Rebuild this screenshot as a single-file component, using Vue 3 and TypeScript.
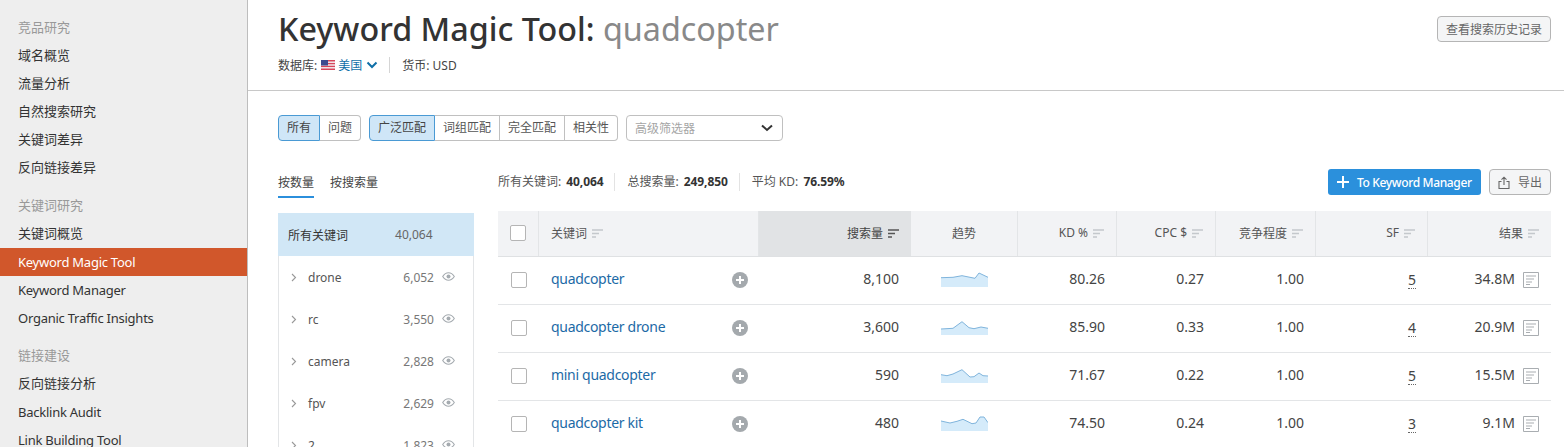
<script setup lang="ts">
interface Row { kw: string; vol: string; spark: string; kd: string; cpc: string; sf: string; res: string }
const nav = [
  { label: '竞品研究', items: ['域名概览', '流量分析', '自然搜索研究', '关键词差异', '反向链接差异'] },
  { label: '关键词研究', items: ['关键词概览', 'Keyword Magic Tool', 'Keyword Manager', 'Organic Traffic Insights'] },
  { label: '链接建设', items: ['反向链接分析', 'Backlink Audit', 'Link Building Tool'] },
]
const isLatin = (s: string) => /^[\x00-\x7f]+$/.test(s)
const groups = [
  { name: 'drone', n: '6,052' }, { name: 'rc', n: '3,550' }, { name: 'camera', n: '2,828' },
  { name: 'fpv', n: '2,629' }, { name: '2', n: '1,823' },
]
const heads = ['KD %', 'CPC $', '竞争程度', 'SF', '结果']
const rows: Row[] = [
  { kw: 'quadcopter', vol: '8,100', spark: '0,5.7 12,5.3 21,3.7 34,6.3 38,1 47,5.3', kd: '80.26', cpc: '0.27', sf: '5', res: '34.8M' },
  { kw: 'quadcopter drone', vol: '3,600', spark: '0,9 12,8.3 21,1.7 28,7.7 33,8.7 40,7 47,8.3', kd: '85.90', cpc: '0.33', sf: '4', res: '20.9M' },
  { kw: 'mini quadcopter', vol: '590', spark: '0,6.7 6,7.7 12,6 21,1.7 29,9 33,8.7 38,5 42,7.7 47,8', kd: '71.67', cpc: '0.22', sf: '5', res: '15.5M' },
  { kw: 'quadcopter kit', vol: '480', spark: '0,5 9,7 16,5.3 22,3.3 31,7.7 35,7 39,1 43,1 47,6.7', kd: '74.50', cpc: '0.24', sf: '3', res: '9.1M' },
]
</script>

<template>
  <div class="page">
    <aside class="side">
      <section v-for="g in nav" :key="g.label" class="side-group">
        <div class="side-label cjk">{{ g.label }}</div>
        <div
          v-for="i in g.items"
          :key="i"
          class="side-item"
          :class="{ active: i === 'Keyword Magic Tool', cjk: !isLatin(i), latin: isLatin(i) }"
        >{{ i }}</div>
      </section>
    </aside>

    <main class="main">
      <header class="head">
        <div>
          <h1 class="title">Keyword Magic Tool: <span>quadcopter</span></h1>
          <div class="meta">
            <span>数据库:</span>
            <svg class="flag" width="14" height="10" viewBox="0 0 14 10">
              <rect width="14" height="10" fill="#d8465a" />
              <rect y="1.5" width="14" height="1.4" fill="#f4f4f8" /><rect y="4.3" width="14" height="1.4" fill="#f4f4f8" /><rect y="7.1" width="14" height="1.4" fill="#f4f4f8" />
              <rect width="7" height="5.5" fill="#3d4a8f" />
            </svg>
            <span class="db">美国</span>
            <svg class="chev" width="12" height="8" viewBox="0 0 12 8"><path d="M1.5 1.5 6 6l4.5-4.5" fill="none" stroke="#0f6fa8" stroke-width="2" /></svg>
            <i class="vsep"></i>
            <span>货币: USD</span>
          </div>
        </div>
        <button class="btn history">查看搜索历史记录</button>
      </header>

      <div class="filters">
        <div class="seg">
          <button class="on">所有</button><button>问题</button>
        </div>
        <div class="seg">
          <button class="on">广泛匹配</button><button>词组匹配</button><button>完全匹配</button><button>相关性</button>
        </div>
        <div class="select">
          <span>高级筛选器</span>
          <svg width="12" height="8" viewBox="0 0 12 8"><path d="M1 1.5 6 6l5-4.500" fill="none" stroke="#333" stroke-width="2" /></svg>
        </div>
      </div>

      <div class="content">
        <div class="left">
          <div class="tabs">
            <span class="tab on">按数量</span><span class="tab">按搜索量</span>
          </div>
          <div class="panel">
            <div class="panel-top"><span>所有关键词</span><span class="num">40,064</span></div>
            <div v-for="g in groups" :key="g.name" class="panel-row">
              <svg width="6" height="9" viewBox="0 0 6 9"><path d="M1 1l3.500 3.500L1 8" fill="none" stroke="#999" stroke-width="1.100" /></svg>
              <span class="g-name">{{ g.name }}</span>
              <span class="g-num">{{ g.n }}</span>
              <svg class="eye" width="13" height="9" viewBox="0 0 13 9"><path d="M.7 4.500C2.300 2 4.200.8 6.500.8s4.200 1.200 5.800 3.700C10.700 7 8.800 8.200 6.500 8.200S2.300 7 .7 4.500Z" fill="none" stroke="#a5abb0" stroke-width="1.100" /><circle cx="6.500" cy="4.500" r="2" fill="#a5abb0" /></svg>
            </div>
          </div>
        </div>

        <div class="right">
          <div class="stats">
            <span class="stat">所有关键词: <b>40,064</b></span>
            <span class="stat">总搜索量: <b>249,850</b></span>
            <span class="stat">平均 KD: <b>76.59%</b></span>
            <span class="spacer"></span>
            <button class="btn-primary">
              <svg width="12" height="12" viewBox="0 0 12 12"><path d="M6 0v12M0 6h12" stroke="#fff" stroke-width="2" /></svg>
              <span>To Keyword Manager</span>
            </button>
            <button class="btn export">
              <svg width="12" height="13" viewBox="0 0 12 13"><path d="M3.500 5.500H1v7h10v-7H8.500M6 9V1.500M3.500 3.700 6 1.200l2.500 2.500" fill="none" stroke="#666" stroke-width="1.100" /></svg>
              导出
            </button>
          </div>

          <div class="grid thead">
            <div class="th c-check"><span class="box"></span></div>
            <div class="th c-kw"><span class="tx">关键词</span>
              <svg class="sort" width="11" height="9" viewBox="0 0 11 9"><path d="M0 1h11M0 4.500h7M0 8h4" stroke="#c4c8cc" stroke-width="1.300" /></svg>
            </div>
            <div class="th c-num sorted"><span class="tx">搜索量</span>
              <svg class="sort" width="11" height="9" viewBox="0 0 11 9"><path d="M0 1h11M0 4.500h7M0 8h4" stroke="#555" stroke-width="1.300" /></svg>
            </div>
            <div class="th c-trend"><span class="tx">趋势</span></div>
            <div v-for="h in heads" :key="h" class="th c-num"><span class="tx">{{ h }}</span>
              <svg class="sort" width="11" height="9" viewBox="0 0 11 9"><path d="M0 1h11M0 4.500h7M0 8h4" stroke="#c4c8cc" stroke-width="1.300" /></svg>
            </div>
          </div>

          <div v-for="r in rows" :key="r.kw" class="grid trow">
            <div class="td c-check"><span class="box"></span></div>
            <div class="td c-kw kw">
              <a class="tx">{{ r.kw }}</a>
              <svg class="plus" width="16" height="16" viewBox="0 0 16 16"><circle cx="8" cy="8" r="8" fill="#a4a9ad" /><path d="M8 4v8M4 8h8" stroke="#fff" stroke-width="2" /></svg>
            </div>
            <div class="td c-num"><span class="tx">{{ r.vol }}</span></div>
            <div class="td c-trend">
              <svg width="47" height="16" viewBox="0 0 47 16">
                <polygon :points="`0,15 ${r.spark} 47,15`" fill="#d5ebfa" />
                <polyline :points="r.spark" fill="none" stroke="#7fb4dc" stroke-width="1" />
              </svg>
            </div>
            <div class="td c-num"><span class="tx">{{ r.kd }}</span></div>
            <div class="td c-num"><span class="tx">{{ r.cpc }}</span></div>
            <div class="td c-num"><span class="tx">1.00</span></div>
            <div class="td c-num"><span class="sf">{{ r.sf }}</span></div>
            <div class="td c-num res">
              <span class="tx">{{ r.res }}</span>
              <svg width="16" height="16" viewBox="0 0 16 16"><path d="M.5.500h15v15H.500zM3 4h10M3 7h8M3 10h6M3 12.500h4" fill="none" stroke="#a9adb1" stroke-width="1" /></svg>
            </div>
          </div>
        </div>
      </div>
    </main>
  </div>
</template>

<style>
html, body { margin: 0; background: #fff; }
</style>

<style scoped>
.page {
  display: flex;
  height: 447px;
  width: 1564px;
  overflow: hidden;
  font-family: "Noto Sans", "Noto Sans CJK SC", sans-serif;
  font-size: 13px;
  color: #333;
}
button { font-family: inherit; cursor: pointer; }
.side {
  width: 247px;
  flex: none;
  background: #eee;
  border-right: 1px solid #bdbdbd;
  padding-top: 14px;
}
.side-group { margin-bottom: 10px; }
.side-label, .side-item { height: 28px; line-height: 28px; padding-left: 18px; white-space: nowrap; }
.side-label.cjk, .side-item.cjk { line-height: 26px; }
.side-item.latin { letter-spacing: -0.25px; }
.side-label { color: #999; }
.side-item { color: #333; }
.side-item.active { background: #d1572b; color: #fff; }
.main { flex: 1; min-width: 0; }
.head {
  height: 90px;
  border-bottom: 1px solid #c8c8c8;
  padding: 0 13px 0 30px;
  display: flex;
  justify-content: space-between;
  align-items: flex-start;
}
.title {
  margin: 6px 0 0;
  font-size: 32.300px;
  line-height: 44px;
  font-weight: 500;
  color: #333;
  white-space: nowrap;
}
.title span { color: #898989; font-weight: 400; }
.meta { display: flex; align-items: center; margin-top: 4px; height: 22px; font-size: 12px; color: #444; }
.flag { margin-left: 4px; }
.db { color: #0f6fa8; margin-left: 3px; }
.chev { margin-left: 4px; }
.vsep { width: 1px; height: 16px; background: #d5d5d5; margin: 0 12px 0 11px; }
.btn {
  background: #f4f5f6;
  border: 1px solid #b5b5b5;
  border-radius: 4px;
  color: #666;
  font-size: 12px;
  height: 26px;
  padding: 0;
}
.history { width: 114px; margin-top: 16px; padding-bottom: 1px; }
.filters { display: flex; gap: 8px; padding: 24px 0 0 30px; height: 26px; }
.seg { display: flex; height: 26px; }
.seg button {
  height: 26px;
  padding: 0 8px 2px;
  background: #fff;
  border: 1px solid #c0c0c0;
  border-left-width: 0;
  font-size: 12px;
  color: #555;
}
.seg button:first-child { border-left-width: 1px; border-radius: 4px 0 0 4px; }
.seg button:last-child { border-radius: 0 4px 4px 0; }
.seg button.on { background: #cfe6f7; border-color: #4a9ad4; color: #444; }
.select {
  height: 24px;
  border: 1px solid #c0c0c0;
  border-radius: 4px;
  display: flex;
  align-items: center;
  justify-content: space-between;
  padding: 0 9px 0 8px;
  width: 138px;
  font-size: 12px;
  color: #a5a5a5;
}
.content { display: flex; padding: 28px 0 0 30px; }
.left { width: 196px; flex: none; }
.tabs { display: flex; gap: 16px; height: 44px; }
.tab { height: 29px; line-height: 28px; font-size: 12px; color: #444; box-sizing: border-box; }
.tab.on { border-bottom: 2px solid #2b8fdc; }
.panel { border: solid #e3e5e7; border-width: 0 1px; height: 300px; }
.panel-top {
  height: 43px;
  background: #d1e7f6;
  display: flex;
  align-items: center;
  padding-left: 10px;
  font-size: 12px;
  margin: 0 -1px;
}
.panel-top .num { margin-left: 47px; color: #666; }
.panel-row { height: 42px; display: flex; align-items: center; padding-left: 12px; font-size: 12px; color: #555; }
.g-name { margin-left: 11px; }
.g-num { margin-left: auto; color: #777; }
.eye { margin: -2px 18px 0 8px; }
.right { width: 1053px; flex: none; margin-left: 24px; }
.stats { display: flex; align-items: center; height: 26px; font-size: 12px; color: #555; margin-bottom: 16px; }
.stat { padding-right: 11px; margin-right: 12px; border-right: 1px solid #e3e3e3; line-height: 18px; white-space: nowrap; }
.stat:nth-child(3) { border: 0; }
.stat b { color: #333; margin-left: 2px; letter-spacing: -0.1px; }
.spacer { flex: 1; }
.btn-primary {
  width: 153px;
  height: 26px;
  border: 0;
  border-radius: 3px;
  background: #2b90dc;
  color: #fff;
  font-size: 12px;
  font-weight: 500;
  letter-spacing: -0.35px;
  display: flex;
  align-items: center;
  gap: 8px;
  padding: 0 0 0 9px;
  white-space: nowrap;
}
.export { width: 62px; margin-left: 8px; display: flex; align-items: center; justify-content: center; gap: 8px; }
.grid {
  display: grid;
  grid-template-columns: 41px 220px 152px 107px 99px 99px 100px 112px 123px;
}
.thead { height: 45px; background: #f2f3f5; border-bottom: 1px solid #dfe1e3; font-size: 12px; color: #555; }
.th { display: flex; align-items: center; gap: 5px; border-right: 1px solid #e3e5e7; }
.th:last-child { border-right: 0; }
.th .tx { margin-bottom: 2px; }
.th.c-kw { padding-left: 12px; justify-content: flex-start; }
.th.c-num { justify-content: flex-end; padding-right: 12px; }
.th.c-trend { justify-content: center; }
.th.sorted { background: #e1e3e5; color: #444; border-right: 0; }
.th.c-check { justify-content: center; padding-bottom: 2px; }
.sort { flex: none; }
.trow { height: 47px; border-bottom: 1px solid #e3e5e7; font-size: 14px; color: #444; }
.td { display: flex; align-items: center; padding-bottom: 1px; }
.td .tx { margin-bottom: 4px; }
.td.c-check { justify-content: center; }
.td.c-num { justify-content: flex-end; padding-right: 12px; }
.td.c-trend { justify-content: center; }
.td.kw { padding-left: 12px; justify-content: space-between; padding-right: 11px; }
.kw a { color: #1c6aa6; letter-spacing: -0.3px; }
.box { width: 14px; height: 14px; border: 1px solid #b5b5b5; border-radius: 2px; background: #fff; display: block; }
.sf { border-bottom: 1px dotted #666; line-height: 17px; margin-bottom: 1px; }
.res { gap: 8px; }
.res svg { flex: none; }
</style>
